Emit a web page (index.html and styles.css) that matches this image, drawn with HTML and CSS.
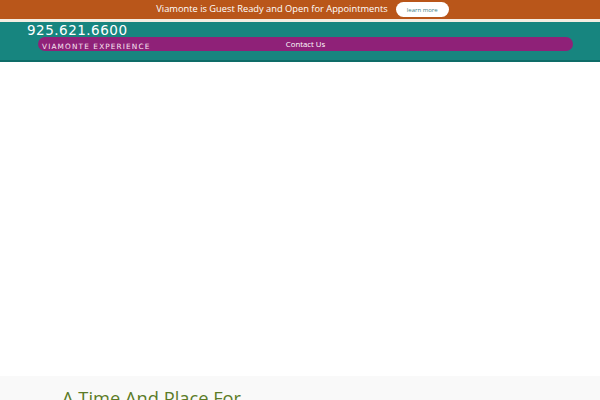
FILE: index.html
```html
<!DOCTYPE html>
<html>
<head>
<meta charset="utf-8">
<link rel="stylesheet" href="styles.css">
</head>
<body>
<div class="topbar">
  <span class="topbar-text">Viamonte is Guest Ready and Open for Appointments</span>
  <a class="learn-btn">learn more</a>
</div>
<header class="header">
  <div class="phone">925.621.6600</div>
  <nav class="navbar">
    <span class="brand">VIAMONTE EXPERIENCE</span>
    <span class="nav-link">Contact Us</span>
  </nav>
</header>
<main class="hero"></main>
<section class="intro">
  <h2 class="intro-title">A Time And Place For</h2>
</section>
</body>
</html>
```
FILE: styles.css
```css
html, body {
  margin: 0;
  padding: 0;
  background: #ffffff;
  font-family: "DejaVu Sans", Verdana, sans-serif;
  overflow: hidden;
}
.topbar {
  height: 19px;
  background: #b9561a;
  display: flex;
  align-items: center;
  justify-content: center;
  gap: 8px;
  padding-left: 5px;
  box-sizing: border-box;
}
.topbar-text {
  color: #ffffff;
  font-family: "Open Sans", sans-serif;
  font-size: 9.3px;
  line-height: 12px;
  margin-top: -2px;
}
.learn-btn {
  display: inline-flex;
  align-items: center;
  justify-content: center;
  width: 53px;
  height: 15px;
  background: #ffffff;
  border-radius: 8px;
  color: #3d7f86;
  font-family: "Open Sans", sans-serif;
  font-size: 6px;
}
.header {
  background: #17857f;
  border-top: 3px solid #f4ede2;
  border-bottom: 2px solid #0e6c68;
  height: 38px;
  box-sizing: content-box;
}
.phone {
  color: #ffffff;
  font-size: 13.5px;
  letter-spacing: 0.5px;
  line-height: 14px;
  padding-left: 27px;
  padding-top: 1px;
}
.navbar {
  position: relative;
  margin: 0 27px 0 38px;
  height: 14px;
  background: #8f2178;
  border-radius: 7px;
  display: flex;
  align-items: center;
  justify-content: center;
}
.brand {
  position: absolute;
  left: 4px;
  bottom: 0;
  color: #fbe6f3;
  font-size: 7.3px;
  letter-spacing: 1.15px;
  line-height: 9px;
}
.nav-link {
  color: #ffffff;
  font-family: "Open Sans", sans-serif;
  font-size: 7.8px;
  margin-top: -1px;
}
.hero {
  height: 314px;
}
.intro {
  background: #f9f9f9;
  height: 24px;
  padding-left: 62px;
  overflow: hidden;
}
.intro-title {
  margin: 0;
  padding-top: 11px;
  font-family: "Open Sans", sans-serif;
  font-weight: 400;
  font-size: 18.3px;
  line-height: 22px;
  color: #5b7b27;
}
```
